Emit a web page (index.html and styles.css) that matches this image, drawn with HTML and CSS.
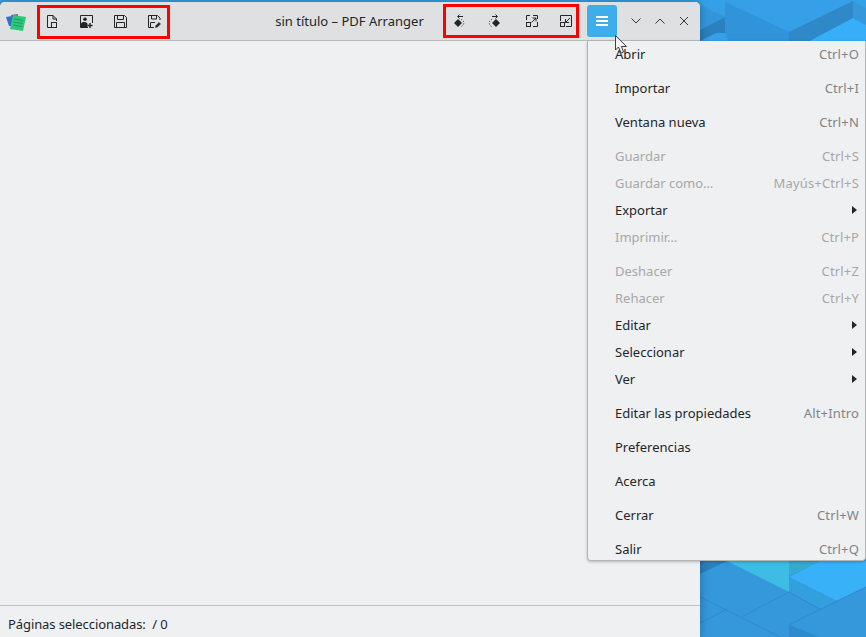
FILE: index.html
```html
<!DOCTYPE html>
<html lang="es">
<head>
<meta charset="utf-8">
<title>sin título – PDF Arranger</title>
<link rel="stylesheet" href="styles.css">
</head>
<body>
<svg class="wallpaper" width="866" height="637" viewBox="0 0 866 637">
  <rect width="866" height="637" fill="#3498db"/>
  <rect width="866" height="42" fill="#35a0e8"/>
  <polygon points="700,30 725,17 725,33 716,33 700,41" fill="#2b80bd"/>
  <polygon points="700,5 725,17 700,30" fill="#3396dc"/>
  <polygon points="725,2 789,32 789,42 729,42 725,33" fill="#3193d9"/>
  <polygon points="789,32 853,1 853,18 808,42 789,42" fill="#2f88c8"/>
  <polygon points="808,42 853,18 866,25 866,42" fill="#38aef8"/>
  <polygon points="853,1 853,18 866,25 866,8" fill="#3498db"/>
  <polygon points="700,561 727,561 700,574" fill="#2b80bd"/>
  <polygon points="727,561 789,561 789,592" fill="#3dbde3"/>
  <polygon points="789,561 820,561 789,576" fill="#35a9cf"/>
  <polygon points="789,577 820,561 866,561 866,587 837,601" fill="#39b1f8"/>
  <polygon points="789,577 837,601 820,609 789,592" fill="#339fde"/>
  <polygon points="789,625 820,637 789,637" fill="#2f8bcb"/>
  <path d="M700 597 L780 637 M742 617 L789 592 L820 609 M700 623 L727 609 M789 625 L837 601 L866 587 M789 625 L815 637" stroke="#2f8bcb" stroke-width="1" fill="none"/>
</svg>

<div class="window">
  <header class="titlebar">
    <svg class="appicon" width="20" height="18" viewBox="0 0 20 18">
      <polygon points="0,3 6,2 8,12 3,12" fill="#2f6fd0"/>
      <polygon points="5,1 12,0 11,10 7,12" fill="#8a4fb8"/>
      <polygon points="7,1 20,3 17,17 4,15" fill="#2fc77a"/>
      <path d="M8 5L17 6.5M7.5 8L16.5 9.5M7 11L16 12.5" stroke="#1f9a5c" stroke-width="1"/>
    </svg>
    <div class="toolgroup first">
      <svg class="icon" width="13" height="13" viewBox="0 0 13 13"><path d="M1.5 12.5V.5H7L10.5 4V6M1.5 12.5H5M7 .5V4H10.5"/><rect x="5.5" y="7.5" width="5" height="5"/></svg>
      <svg class="icon" width="13" height="13" viewBox="0 0 13 13"><path d="M8 12.5H.5V.5H12.5V8"/><circle class="solid" cx="5" cy="4.2" r="1.8"/><path class="solid" d="M1 12.5V9C1 7.5 2.5 7 4.5 7S7.5 8 7.5 9.5V12.5Z"/><path class="plus" d="M10 8V13M7.5 10.5H12.5"/></svg>
      <svg class="icon" width="13" height="13" viewBox="0 0 13 13"><path d="M.5 .5H10.5L12.5 2.5V12.5H.5Z"/><path d="M3.5 .5V4.5H9.5V.5M2.5 12.5V7.5H10.5V12.5"/></svg>
      <svg class="icon" width="13" height="13" viewBox="0 0 13 13"><path d="M6 12.5H.5V.5H9.5L12 3V5"/><path d="M3.5 .5V4H8.5V.5M2.5 12.5V7.5H7"/><path class="pen" d="M7.5 12.5L8 10.5L11 7.5L12.5 9L9.5 12Z"/></svg>
    </div>
    <div class="title">sin título – PDF Arranger</div>
    <div class="toolgroup second">
      <svg class="icon" width="13" height="13" viewBox="0 0 13 13"><path d="M9 1.5H4M5.5 -.5L3.5 1.5L5.5 3.5"/><polygon class="solid" points="4,4 8,8 4,12 0,8"/><path class="dots" d="M7 4.5A3.6 3.6 0 0 1 7 11.5"/></svg>
      <svg class="icon" width="13" height="13" viewBox="0 0 13 13"><path d="M5 1.5H10M8.5 -.5L10.5 1.5L8.5 3.5"/><polygon class="solid" points="9,4 13,8 9,12 5,8"/><path class="dots" d="M5 4.5A3.6 3.6 0 0 0 5 11.5"/></svg>
      <svg class="icon wide" width="13" height="13" viewBox="0 0 13 13"><path d="M.5 5V.5H4M7 .5H11.5V4M11.5 7V11.5H7"/><rect x=".5" y="7.5" width="4" height="4"/><path d="M5.5 7.5L10 3M6.5 3H10V6.5"/></svg>
      <svg class="icon last" width="13" height="13" viewBox="0 0 13 13"><path d="M.5 6V.5H11.5V11.5H6"/><rect x=".5" y="7.5" width="4" height="4"/><path d="M10 3L5.5 7.5M5.5 4V7.5H9"/></svg>
    </div>
    <button class="menubtn">
      <svg width="12" height="10" viewBox="0 0 12 10"><path d="M0 1H12M0 5H12M0 9H12" stroke="#fff" stroke-width="2"/></svg>
    </button>
    <div class="wincontrols">
      <svg class="ctl" width="10" height="6" viewBox="0 0 10 6"><path d="M.5 .5L5 5L9.5 .5"/></svg>
      <svg class="ctl" width="10" height="6" viewBox="0 0 10 6"><path d="M.5 5.5L5 1L9.5 5.5"/></svg>
      <svg class="ctl" width="10" height="10" viewBox="0 0 10 10"><path d="M1 1L9 9M9 1L1 9"/></svg>
    </div>
  </header>
  <main class="content"></main>
  <footer class="statusbar">Páginas seleccionadas:&nbsp; / 0</footer>
</div>

<nav class="menu">
  <div class="row"><span>Abrir</span><span class="key">Ctrl+O</span></div>
  <div class="row sep"><span>Importar</span><span class="key">Ctrl+I</span></div>
  <div class="row sep"><span>Ventana nueva</span><span class="key">Ctrl+N</span></div>
  <div class="row sep off"><span>Guardar</span><span class="key">Ctrl+S</span></div>
  <div class="row off"><span>Guardar como…</span><span class="key">Mayús+Ctrl+S</span></div>
  <div class="row"><span>Exportar</span><i class="arrow"></i></div>
  <div class="row off"><span>Imprimir…</span><span class="key">Ctrl+P</span></div>
  <div class="row sep off"><span>Deshacer</span><span class="key">Ctrl+Z</span></div>
  <div class="row off"><span>Rehacer</span><span class="key">Ctrl+Y</span></div>
  <div class="row"><span>Editar</span><i class="arrow"></i></div>
  <div class="row"><span>Seleccionar</span><i class="arrow"></i></div>
  <div class="row"><span>Ver</span><i class="arrow"></i></div>
  <div class="row sep"><span>Editar las propiedades</span><span class="key">Alt+Intro</span></div>
  <div class="row sep"><span>Preferencias</span></div>
  <div class="row sep"><span>Acerca</span></div>
  <div class="row sep"><span>Cerrar</span><span class="key">Ctrl+W</span></div>
  <div class="row sep"><span>Salir</span><span class="key">Ctrl+Q</span></div>
</nav>

<svg class="cursor" width="14" height="22" viewBox="0 0 14 22"><polygon points="0.5,0.5 0.5,15 3.5,12 6,18 8.5,17 6.5,11.5 11.5,11.5" fill="#f4f4f4" stroke="#3b3f44" stroke-width="1"/></svg>
</body>
</html>
```
FILE: styles.css
```css
* { box-sizing: border-box; }
html, body { margin: 0; height: 100%; }
body {
  position: relative;
  width: 866px;
  height: 637px;
  overflow: hidden;
  font-family: "Noto Sans", sans-serif;
  font-size: 13px;
  color: #232629;
}
.wallpaper { position: absolute; left: 0; top: 0; }
.window {
  position: relative;
  width: 700px;
  height: 635px;
  margin-top: 2px;
  display: flex;
  flex-direction: column;
  background: #eff0f1;
  border-radius: 5px 5px 0 0;
  box-shadow: 0 0 10px rgba(0, 0, 0, .3);
}
.titlebar {
  height: 39px;
  flex: none;
  display: flex;
  align-items: center;
  background: #dee0e2;
  border-bottom: 1px solid #b9babb;
  border-radius: 5px 5px 0 0;
}
.appicon { margin: 3px 0 0 6px; flex: none; }
.toolgroup {
  display: flex;
  align-items: flex-start;
  height: 34px;
  border: 3px solid #ff0000;
  gap: 21px;
}
.toolgroup.first { margin: 2px 0 0 11px; width: 133px; padding: 7px 0 0 6px; }
.toolgroup.second { width: 136px; padding: 8px 0 0 8px; gap: 20px; }
.icon { flex: none; fill: none; stroke: #232629; stroke-width: 1; overflow: visible; }
.icon .solid { fill: #232629; stroke: none; }
.icon .plus { stroke: #232629; stroke-width: 1.4; }
.icon .pen { fill: #232629; stroke: #232629; stroke-width: .5; }
.icon .dots { stroke-dasharray: 1 1.6; }
.icon.wide { margin-left: 6px; }
.icon.last { margin-left: 1px; }
.title { flex: 1; text-align: center; padding-left: 86px; line-height: 38px; }
.menubtn {
  margin-left: 8px;
  width: 30px;
  height: 32px;
  flex: none;
  padding: 0;
  border: 0;
  border-radius: 3px;
  background: #3daee9;
  display: flex;
  align-items: center;
  justify-content: center;
}
.wincontrols {
  display: flex;
  align-items: center;
  width: 83px;
  padding-left: 14px;
  gap: 14px;
}
.ctl { fill: none; stroke: #31363b; stroke-width: 1; flex: none; }
.content { flex: 1; }
.statusbar {
  height: 32px;
  flex: none;
  border-top: 1px solid #c0c1c2;
  padding: 9px 0 0 8px;
  line-height: 18px;
  letter-spacing: -.09px;
}
.menu {
  position: absolute;
  left: 587px;
  top: 41px;
  width: 279px;
  height: 520px;
  overflow: hidden;
  background: #eff0f1;
  border: 1px solid #b5b6b7;
  border-top: 0;
  border-radius: 0 0 4px 4px;
  box-shadow: 0 1px 3px rgba(0, 0, 0, .25);
}
.row {
  height: 27px;
  display: flex;
  align-items: center;
  justify-content: space-between;
  padding: 0 6px 0 27px;
  white-space: nowrap;
}
.row:first-child { margin-top: -1px; }
.row.sep { margin-top: 7px; }
.key { color: #7f8487; letter-spacing: .15px; }
.off, .off .key { color: #a6a8aa; }
.arrow {
  margin-right: 2px;
  width: 0;
  height: 0;
  border-left: 5px solid #232629;
  border-top: 4.5px solid transparent;
  border-bottom: 4.5px solid transparent;
}
.cursor { position: absolute; left: 615px; top: 35px; }
```
